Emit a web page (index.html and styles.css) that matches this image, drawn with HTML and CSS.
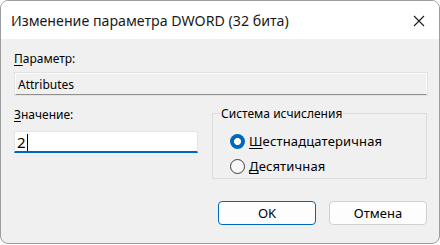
FILE: index.html
```html
<!DOCTYPE html>
<html lang="ru">
<head>
  <meta charset="UTF-8" />
  <title>Изменение параметра DWORD (32 бита)</title>
  <link rel="stylesheet" href="styles.css">
</head>
<body>
  <div class="window">
    <div class="titlebar">
      <span class="title">Изменение параметра DWORD (32 бита)</span>
      <svg class="close" width="12" height="12" viewBox="0 0 12 12">
        <path d="M1 1 L11 11 M11 1 L1 11" stroke="#1a1a1a" stroke-width="1.1" fill="none"/>
      </svg>
    </div>

    <div class="content">
      <label class="lbl"><u>П</u>араметр:</label>
      <div class="field disabled">Attributes</div>

      <div class="row">
        <div class="col-left">
          <label class="lbl"><u>З</u>начение:</label>
          <div class="field edit">2<span class="caret"></span></div>
        </div>

        <fieldset class="group">
          <legend>Система исчисления</legend>
          <div class="radio">
            <span class="dot checked"></span>
            <span><u>Ш</u>естнадцатеричная</span>
          </div>
          <div class="radio">
            <span class="dot"></span>
            <span><u>Д</u>есятичная</span>
          </div>
        </fieldset>
      </div>

      <div class="buttons">
        <button class="btn default">OK</button>
        <button class="btn">Отмена</button>
      </div>
    </div>
  </div>
</body>
</html>
```

FILE: styles.css
```css
* {
  box-sizing: border-box;
}

body {
  margin: 0;
  background: #ffffff;
  font-family: 'Noto Sans', 'Open Sans', sans-serif;
  color: #000;
}

.window {
  width: 440px;
  height: 244px;
  border: 1px solid #9c9c9c;
  border-radius: 8px;
  overflow: hidden;
  background: #f0f0f0;
  display: flex;
  flex-direction: column;
}

.titlebar {
  height: 38px;
  background: #ffffff;
  display: flex;
  align-items: center;
  justify-content: space-between;
  padding: 0 14px 0 10px;
}

.title {
  font-size: 14.2px;
  color: #1a1a1a;
}

.close {
  margin-top: 1px;
}

.content {
  padding: 12px 12px 0 13px;
  font-size: 12px;
  line-height: 15px;
}

.lbl {
  display: block;
  color: #000;
}

u {
  text-decoration-thickness: 1px;
  text-underline-offset: 2px;
}

.field {
  height: 22px;
  margin-top: 7px;
  padding: 2px 2px 0 2px;
  border: 1px solid #e3e3e3;
  line-height: 17px;
}

.field.disabled {
  margin-left: 1px;
  background: #f0f0f0;
  border-bottom-color: #8f8f8f;
  border-top-color: #fbfbfb;
  border-left-color: #fbfbfb;
  border-right-color: #fbfbfb;
  box-shadow: 0 0 0 1px #e3e3e3;
}

.field.edit {
  background: #fff;
  border-color: #e5e5e5;
  border-bottom: 2px solid #0067c0;
  padding-left: 2px;
  font-size: 15px;
  display: flex;
  align-items: center;
}

.caret {
  display: inline-block;
  width: 1px;
  height: 17px;
  background: #000;
  margin-left: 1px;
}

.row {
  display: flex;
  justify-content: space-between;
  margin-top: 12px;
}

.col-left {
  width: 184px;
}

.col-left .field {
  margin-top: 9px;
}

.group {
  width: 215px;
  height: 73px;
  margin: -1px 0 0 0;
  padding: 8px 0 0 17px;
  border: 1px solid #dcdcdc;
}

.group legend {
  padding: 0 1px;
  margin-left: -10px;
}

.radio {
  display: flex;
  align-items: center;
  gap: 4px;
  height: 25px;
  font-size: 13px;
  letter-spacing: 0.15px;
}

.dot {
  width: 15px;
  height: 15px;
  border-radius: 50%;
  border: 1px solid #3d3d3d;
  background: #f8f8f8;
  flex: none;
}

.dot.checked {
  border: none;
  background: radial-gradient(circle, #ffffff 0 3.2px, #0067c0 3.8px);
}

.buttons {
  display: flex;
  justify-content: flex-end;
  gap: 13px;
  margin-top: 22px;
}

.btn {
  width: 98px;
  height: 24px;
  background: #fdfdfd;
  border: 1px solid #d0d0d0;
  border-radius: 4px;
  font-family: inherit;
  font-size: 13px;
  color: #000;
  padding: 0;
}

.btn.default {
  border-color: #0067c0;
}
```
